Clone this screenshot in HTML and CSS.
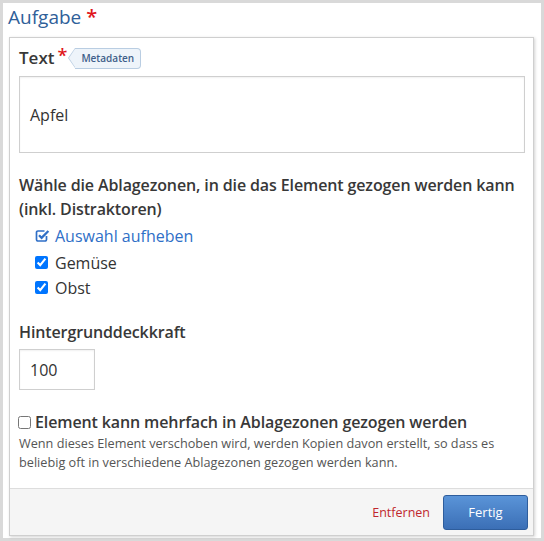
FILE: index.html
```html
<!DOCTYPE html>
<html lang="de">
<head>
<meta charset="utf-8">
<link rel="stylesheet" href="styles.css">
</head>
<body>
<div class="frame">
  <div class="title">Aufgabe <span class="req">*</span></div>
  <div class="panel">
    <div class="body">
      <div class="label-row">
        <span class="label">Text</span><span class="req small">*</span>
        <span class="tag">Metadaten</span>
      </div>
      <div class="textbox">Apfel</div>

      <div class="label multi">Wähle die Ablagezonen, in die das Element gezogen werden kann (inkl. Distraktoren)</div>
      <ul class="checks">
        <li class="toggle">
          <svg class="cs" viewBox="0 0 15 15" width="15" height="15"><path d="M11.5 8v3.6a1.4 1.4 0 0 1-1.4 1.4H2.9a1.4 1.4 0 0 1-1.4-1.4V4.4A1.4 1.4 0 0 1 2.9 3h6.6" fill="none" stroke="#2f6fc7" stroke-width="1.7"/><path d="M4 7.2l2.6 2.6L13.4 3" fill="none" stroke="#2f6fc7" stroke-width="2.3"/></svg>
          <span>Auswahl aufheben</span>
        </li>
        <li><input type="checkbox" checked><span>Gemüse</span></li>
        <li><input type="checkbox" checked><span>Obst</span></li>
      </ul>

      <div class="label">Hintergrunddeckkraft</div>
      <div class="numbox">100</div>

      <div class="multi-row"><input type="checkbox"><span class="label">Element kann mehrfach in Ablagezonen gezogen werden</span></div>
      <div class="help">Wenn dieses Element verschoben wird, werden Kopien davon erstellt, so dass es beliebig oft in verschiedene Ablagezonen gezogen werden kann.</div>
    </div>
    <div class="footer">
      <span class="remove">Entfernen</span>
      <span class="btn">Fertig</span>
    </div>
  </div>
</div>
</body>
</html>
```
FILE: styles.css
```css
html, body { margin: 0; padding: 0; background: #fff; }
body { font-family: "Open Sans", "DejaVu Sans", sans-serif; color: #333; }
.frame {
  width: 544px; height: 541px; box-sizing: border-box;
  border: 3px solid #d9d9d9;
  padding: 2px 7px 0 6px;
}
.title {
  font-size: 19px; line-height: 24px; color: #2f6099;
  margin-left: -1px; height: 32px;
}
.req { color: #e0161b; font-size: 20px; font-weight: 600; }
.req.small { font-size: 18px; margin-left: 3px; position: relative; top: -3px; }
.panel {
  border: 1px solid #cfcfcf;
  box-shadow: 1px 1px 3px rgba(0,0,0,0.18);
  background: #fff;
}
.body { padding: 7px 8px 16px 9px; }
.label-row { display: flex; align-items: center; height: 26px; }
.label { font-size: 16px; font-weight: 600; letter-spacing: -0.12px; color: #383838; line-height: 24px; }
.label-row .label { font-size: 17px; letter-spacing: 0; }
.tag {
  position: relative; margin-left: 8px;
  font-size: 10px; font-weight: 600; color: #3f5f8a;
  background: #eef4fa; border: 1px solid #b9cde2; border-left: none;
  border-radius: 0 4px 4px 0; padding: 2px 6px 3px 6px; line-height: 14px;
}
.tag::before {
  content: ""; position: absolute; left: -7px; top: -1px;
  width: 0; height: 0;
  border-top: 10px solid transparent; border-bottom: 10px solid transparent;
  border-right: 7px solid #b9cde2;
}
.tag::after {
  content: ""; position: absolute; left: -6px; top: 0;
  width: 0; height: 0;
  border-top: 9px solid transparent; border-bottom: 9px solid transparent;
  border-right: 6px solid #eef4fa;
}
.textbox {
  margin-top: 5px; box-sizing: border-box; height: 77px;
  border: 1px solid #cfcfcf; box-shadow: inset 0 1px 2px rgba(0,0,0,0.06);
  padding: 0 10px; display: flex; align-items: center;
  font-size: 16px; color: #333;
}
.multi { margin-top: 20px; }
.checks { list-style: none; margin: 1px 0 0 0; padding: 0 0 0 16px; }
.checks li { display: flex; align-items: center; height: 25px; font-size: 16px; }
.checks li.toggle { color: #2f6fc7; height: 28px; }
.checks input { width: 13px; height: 13px; margin: 0 7px 0 0; accent-color: #0075ff; }
.cs { margin-right: 5px; margin-top: -2px; }
.numbox {
  margin-top: 5px; width: 76px; height: 41px; box-sizing: border-box;
  border: 1px solid #cfcfcf; box-shadow: inset 0 1px 2px rgba(0,0,0,0.06);
  padding: 0 10px; display: flex; align-items: center; font-size: 16px;
}
.checks + .label { margin-top: 20px; }
.multi-row { display: flex; align-items: center; margin-top: 20px; margin-left: -1px; }
.multi-row input { width: 13px; height: 13px; margin: 0 4px 0 0; }
.help { font-size: 12.7px; line-height: 19px; color: #555; margin-top: 0; }
.footer {
  border-top: 1px solid #ddd; background: #f5f5f5;
  display: flex; justify-content: flex-end; align-items: center;
  height: 46px; padding: 0 5px 0 0; gap: 13px;
}
.remove { color: #c0272d; font-size: 12.5px; }
.btn {
  width: 85px; height: 35px; box-sizing: border-box;
  display: flex; align-items: center; justify-content: center;
  color: #fff; font-size: 13px;
  background: linear-gradient(#5a94d8, #3b6fb6);
  border: 1px solid #2e5d9c; border-radius: 3px;
}
```
